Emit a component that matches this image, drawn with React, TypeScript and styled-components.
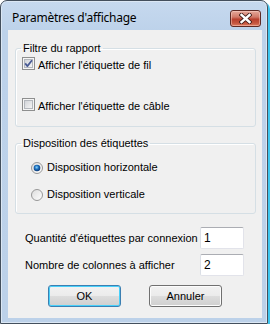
import { createGlobalStyle, styled } from 'styled-components';

const GlobalStyle = createGlobalStyle`
  html, body {
    margin: 0;
    padding: 0;
    background: #ffffff;
  }
  body {
    font-family: 'Liberation Sans', Arial, sans-serif;
    font-size: 11px;
    color: #000;
  }
`;

const CheckBox = ({ checked }: { checked: boolean }) => (
  <BoxIcon width='13' height='13' viewBox='0 0 13 13'>
    <defs>
      <linearGradient id='cbInner' x1='0' y1='0' x2='1' y2='1'>
        <stop offset='0' stopColor='#cfd2d7' />
        <stop offset='1' stopColor='#f7f7f7' />
      </linearGradient>
    </defs>
    <rect x='0.5' y='0.5' width='12' height='12' fill='#f5f5f5' stroke='#8e8f8f' />
    <rect x='2.5' y='2.5' width='8' height='8' fill='url(#cbInner)' stroke='#b3b7bd' />
    {checked && (
      <path
        d='M3.2 6.4 L5.4 9.1 L10 3.3'
        fill='none'
        stroke='#485a94'
        strokeWidth='1.7'
        strokeLinejoin='round'
      />
    )}
  </BoxIcon>
);

const Radio = ({ checked }: { checked: boolean }) => (
  <RadioIcon width='12' height='12' viewBox='0 0 12 12'>
    <defs>
      <linearGradient id='rdOuter' x1='0' y1='0' x2='1' y2='1'>
        <stop offset='0' stopColor='#dcdcdc' />
        <stop offset='1' stopColor='#ffffff' />
      </linearGradient>
      <radialGradient id='rdDot' cx='0.45' cy='0.4' r='0.6'>
        <stop offset='0' stopColor='#8ad7fb' />
        <stop offset='0.5' stopColor='#1d6ebd' />
        <stop offset='1' stopColor='#0c3772' />
      </radialGradient>
    </defs>
    <circle cx='6' cy='6' r='5.5' fill='url(#rdOuter)' stroke='#979797' />
    {checked && <circle cx='6' cy='6' r='3.3' fill='url(#rdDot)' />}
  </RadioIcon>
);

const CloseGlyph = () => (
  <svg width='13' height='11' viewBox='0 0 13 11'>
    <path d='M2.5 2 L10.5 9 M10.5 2 L2.5 9' stroke='#3d1a16' strokeWidth='4.2' strokeLinecap='square' />
    <path d='M2.5 2 L10.5 9 M10.5 2 L2.5 9' stroke='#ffffff' strokeWidth='2.4' strokeLinecap='square' />
  </svg>
);

const App = () => (
  <>
    <GlobalStyle />
    <Window>
      <TitleBar>
        <Title>Paramètres d'affichage</Title>
        <CloseButton>
          <CloseGlyph />
        </CloseButton>
      </TitleBar>
      <Client>
        <Group>
          <Legend>Filtre du rapport</Legend>
          <CheckRows>
            <CheckRow>
              <CheckBox checked />
              <Label>Afficher l'étiquette de fil</Label>
            </CheckRow>
            <CheckRow>
              <CheckBox checked={false} />
              <Label>Afficher l'étiquette de câble</Label>
            </CheckRow>
          </CheckRows>
        </Group>
        <Group $spaced>
          <Legend>Disposition des étiquettes</Legend>
          <RadioRows>
            <RadioRow>
              <Radio checked />
              <Label>Disposition horizontale</Label>
            </RadioRow>
            <RadioRow>
              <Radio checked={false} />
              <Label>Disposition verticale</Label>
            </RadioRow>
          </RadioRows>
        </Group>
        <Fields>
          <FieldLabel>Quantité d'étiquettes par connexion</FieldLabel>
          <TextBox>1</TextBox>
          <FieldLabel>Nombre de colonnes à afficher</FieldLabel>
          <TextBox>2</TextBox>
        </Fields>
        <Buttons>
          <Button $default>OK</Button>
          <Button>Annuler</Button>
        </Buttons>
      </Client>
    </Window>
  </>
);

const Window = styled.div`
  box-sizing: border-box;
  width: 268px;
  height: 324px;
  border: 1px solid #434f5d;
  border-radius: 7px 7px 0 0;
  background: linear-gradient(180deg, #c6d9ef 0px, #bdd2ea 30px, #bcd1e9 100%);
  box-shadow: inset 0 0 0 1px #dbe7f4, 2px 2px 0 #3ec6ef;
  padding: 0 5px 5px 7px;
  display: flex;
  flex-direction: column;
`;

const TitleBar = styled.div`
  height: 29px;
  display: flex;
  justify-content: space-between;
  align-items: flex-start;
  margin-left: -7px;
  margin-right: -5px;
  padding: 0 6px 0 11px;
`;

const Title = styled.div`
  font-family: 'Noto Sans', 'Open Sans', sans-serif;
  font-size: 12px;
  line-height: 16px;
  padding-top: 9px;
  color: #000;
  letter-spacing: -0.25px;
`;

const CloseButton = styled.div`
  box-sizing: border-box;
  width: 31px;
  height: 17px;
  margin-top: 9px;
  border: 1px solid #5e2a24;
  border-radius: 3px;
  background: linear-gradient(180deg, #e5a89a 0%, #d17a69 40%, #b8402e 55%, #c4553f 80%, #dd7b5f 100%);
  box-shadow: inset 0 0 0 1px rgba(255, 220, 210, 0.45);
  display: flex;
  align-items: center;
  justify-content: center;
`;

const Client = styled.div`
  box-sizing: border-box;
  width: 254px;
  height: 288px;
  background: #f0f0f0;
  padding: 12px 0 0 7px;
  display: flex;
  flex-direction: column;
`;

const Group = styled.fieldset<{ $spaced?: boolean }>`
  box-sizing: border-box;
  width: 241px;
  margin: ${(props) => (props.$spaced ? '10px' : '0')} 0 0 0;
  padding: 0;
  border: 1px solid #d5dfe5;
  border-radius: 3px;
  box-shadow: inset 1px 1px 0 #ffffff;
`;

const Legend = styled.legend`
  padding: 0 2px;
  margin-left: 5px;
  line-height: 13px;
  font-size: 11px;
`;

const CheckRows = styled.div`
  display: flex;
  flex-direction: column;
  gap: 26px;
  padding: 2px 0 13px 6px;
`;

const CheckRow = styled.div`
  display: flex;
  align-items: flex-start;
  gap: 3px;
  height: 15px;
`;

const BoxIcon = styled.svg`
  display: block;
  flex: none;
`;

const RadioIcon = styled.svg`
  display: block;
  flex: none;
`;

const Label = styled.span`
  line-height: 13px;
  white-space: nowrap;

  ${CheckRow} & {
    padding-top: 2px;
  }
`;

const RadioRows = styled.div`
  display: flex;
  flex-direction: column;
  gap: 14px;
  padding: 11px 0 12px 15px;
`;

const RadioRow = styled.div`
  display: flex;
  align-items: center;
  gap: 4px;
  height: 13px;
`;

const Fields = styled.div`
  display: grid;
  grid-template-columns: 175px 44px;
  row-gap: 5px;
  align-items: center;
  margin-top: 13px;
  padding-left: 10px;
`;

const FieldLabel = styled.div`
  line-height: 13px;
  white-space: nowrap;
`;

const TextBox = styled.div`
  box-sizing: border-box;
  height: 22px;
  background: #ffffff;
  border: 1px solid #e2e3ea;
  border-top-color: #abadb3;
  border-left-color: #dbdfe6;
  border-radius: 2px;
  padding: 3px 0 0 3px;
  font-size: 12px;
  line-height: 15px;
`;

const Buttons = styled.div`
  display: flex;
  gap: 28px;
  margin-top: 9px;
  padding-left: 33px;
`;

const Button = styled.div<{ $default?: boolean }>`
  box-sizing: border-box;
  width: 73px;
  height: 22px;
  border: 1px solid ${(props) => (props.$default ? '#3c7fb1' : '#707070')};
  border-radius: 3px;
  background: linear-gradient(180deg, #f2f2f2 0%, #ebebeb 50%, #dddddd 51%, #cfcfcf 100%);
  box-shadow: inset 0 0 0 1px ${(props) => (props.$default ? '#48d0fa' : '#fcfcfc')};
  display: flex;
  align-items: center;
  justify-content: center;
  line-height: 13px;
`;

export default App;
